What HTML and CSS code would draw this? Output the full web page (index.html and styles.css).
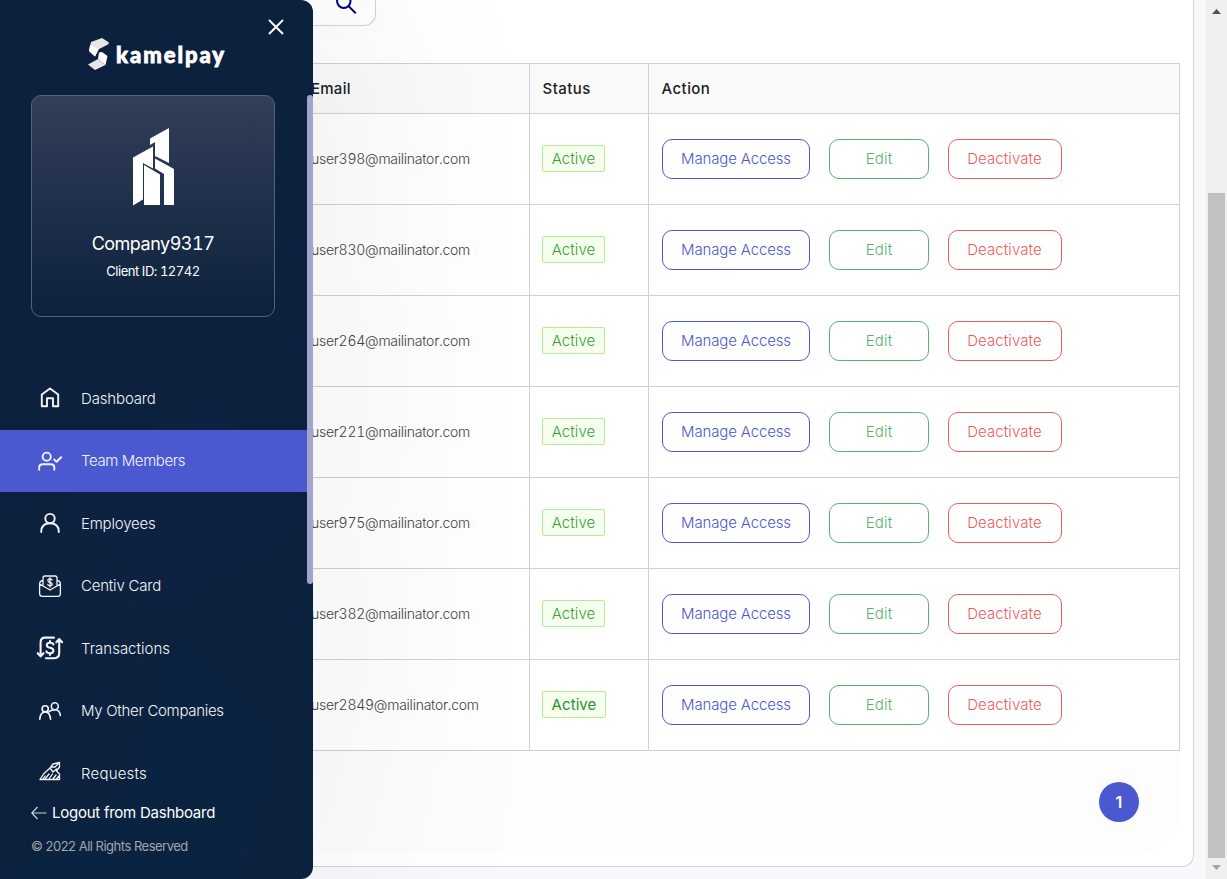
FILE: index.html
```html
<!DOCTYPE html>
<html lang="en">
<head>
<meta charset="utf-8">
<title>Team Members</title>
<link rel="stylesheet" href="styles.css">
</head>
<body>
<div class="page">
  <main class="content">
    <section class="panel">
      <div class="search"><svg width="24" height="24" viewBox="0 0 24 24" fill="none" stroke="#00007d" stroke-width="2"><circle cx="8.800" cy="9.300" r="6.700"/><path d="M13.600 14.100L20.700 21.200"/></svg></div>
      <div class="table-area">
        <table class="members">
          <thead><tr><th class="col-email">Email</th><th class="col-status">Status</th><th>Action</th></tr></thead>
          <tbody>
            <tr><td><span class="email">user398@mailinator.com</span></td><td><span class="tag">Active</span></td><td><div class="actions"><button class="btn manage"><span>Manage Access</span></button><button class="btn edit"><span>Edit</span></button><button class="btn deactivate"><span>Deactivate</span></button></div></td></tr>
            <tr><td><span class="email">user830@mailinator.com</span></td><td><span class="tag">Active</span></td><td><div class="actions"><button class="btn manage"><span>Manage Access</span></button><button class="btn edit"><span>Edit</span></button><button class="btn deactivate"><span>Deactivate</span></button></div></td></tr>
            <tr><td><span class="email">user264@mailinator.com</span></td><td><span class="tag">Active</span></td><td><div class="actions"><button class="btn manage"><span>Manage Access</span></button><button class="btn edit"><span>Edit</span></button><button class="btn deactivate"><span>Deactivate</span></button></div></td></tr>
            <tr><td><span class="email">user221@mailinator.com</span></td><td><span class="tag">Active</span></td><td><div class="actions"><button class="btn manage"><span>Manage Access</span></button><button class="btn edit"><span>Edit</span></button><button class="btn deactivate"><span>Deactivate</span></button></div></td></tr>
            <tr><td><span class="email">user975@mailinator.com</span></td><td><span class="tag">Active</span></td><td><div class="actions"><button class="btn manage"><span>Manage Access</span></button><button class="btn edit"><span>Edit</span></button><button class="btn deactivate"><span>Deactivate</span></button></div></td></tr>
            <tr><td><span class="email">user382@mailinator.com</span></td><td><span class="tag">Active</span></td><td><div class="actions"><button class="btn manage"><span>Manage Access</span></button><button class="btn edit"><span>Edit</span></button><button class="btn deactivate"><span>Deactivate</span></button></div></td></tr>
            <tr><td><span class="email">user2849@mailinator.com</span></td><td><span class="tag strong">Active</span></td><td><div class="actions"><button class="btn manage"><span>Manage Access</span></button><button class="btn edit"><span>Edit</span></button><button class="btn deactivate"><span>Deactivate</span></button></div></td></tr>
          </tbody>
        </table>
        <div class="pager"><span class="page-number">1</span></div>
      </div>
    </section>
  </main>
  <div class="scrollbar">
    <svg class="arrow" width="21" height="21" viewBox="0 0 21 21"><path d="M6 14L10.500 9L15 14Z" fill="#505050"/></svg>
    <div class="thumb"></div>
    <svg class="arrow" width="21" height="21" viewBox="0 0 21 21"><path d="M6 7L15 7L10.500 12Z" fill="#a3a3a3"/></svg>
  </div>

  <aside class="drawer">
    <svg class="backdrop" width="313" height="520" viewBox="0 0 313 520">
      <path d="M143 72L213 45L304 145L302 170L160 255L72 130Z" fill="#10264a" opacity=".3"/>
      <path d="M183 285L278 378L240 520H0L137 423L163 310Z" fill="#08274a" opacity=".38"/>
      <path d="M72 130L130 205L160 423L32 300Z" fill="#0c2444" opacity=".3"/>
    </svg>
    <header class="drawer-head">
      <svg class="mark" width="21" height="33" viewBox="0 0 21 33"><path d="M3 4L14 0L21 4.500L20 6.500L11 11L7 18.500L1 13Z" fill="#e6e6e6"/><path d="M2 7L10.500 11L7 18.500L1 13Z" fill="#fff"/><path d="M11 14.500L14 14L19.500 18L17.500 27L10 21Z" fill="#fff"/><path d="M0 26.500L10 21L17.500 27L7 32Z" fill="#e6e6e6"/></svg>
      <span class="brand">kamelpay</span>
      <svg class="close" width="16" height="16" viewBox="0 0 16 16" stroke="#fff" stroke-width="1.900"><path d="M1 1L15 15M15 1L1 15"/></svg>
    </header>
    <div class="drawer-scroll">
      <div class="drawer-body">
        <section class="company">
          <svg class="building" width="42" height="78" viewBox="0 0 42 78" fill="#fff"><path d="M17 10.500L36 0V35L22 28V14L17 17Z"/><path d="M0 29.500L20 18.500V40.500L10 35V71.500L0 77.500Z"/><path d="M11 37L27 46.500V77H11Z"/><path d="M22 30.500L41 41V77H31V46L22 40.500Z"/></svg>
          <div class="company-name">Company9317</div>
          <div class="client-id">Client ID: 12742</div>
        </section>
        <nav class="menu">
          <a class="item"><svg width="28" height="28" viewBox="0 0 28 28"><path d="M5.800 22.200V10.500L14 4.500L22.200 10.500V22.200H17V14.200H11V22.200Z"/></svg><span class="w-dash">Dashboard</span></a>
          <a class="item active"><svg width="28" height="28" viewBox="0 0 28 28"><circle cx="10.700" cy="9.700" r="4.100"/><path d="M3.200 22.800V20.500Q3.200 17.300 7 17.300H14.500Q18.300 17.300 18.300 20.500V22.800M18.200 12.500L20.500 14.800L25.200 10.200"/></svg><span class="w-team">Team Members</span></a>
          <a class="item"><svg width="28" height="28" viewBox="0 0 28 28"><circle cx="14" cy="9.600" r="4.700"/><path d="M5.200 23Q5.200 14.300 14 14.300Q22.800 14.300 22.800 23"/></svg><span class="w-emp">Employees</span></a>
          <a class="item"><svg width="28" height="28" viewBox="0 0 28 28" stroke-width="1.300"><path d="M7 8.500Q3.600 9 3.600 12V21.500Q3.600 24.400 6.500 24.400H21.500Q24.400 24.400 24.400 21.500V12Q24.400 9 21 8.500M3.600 12L14 18L24.400 12M7 14V6Q7 4 9 4H19Q21 4 21 6V14"/><path d="M16 8Q16 6.900 14 6.900Q11.900 6.900 11.900 8.600Q11.900 10.100 14 10.300Q16.200 10.600 16.200 12.200Q16.200 13.700 14 13.700Q11.900 13.700 11.800 12.500M14 5.700V15"/></svg><span class="w-card">Centiv Card</span></a>
          <a class="item"><svg width="28" height="28" viewBox="0 0 28 28" stroke-width="2.100"><path d="M18 3.600H9Q4.600 3.600 4.600 8.500V22M1.700 19.200L4.600 22.400L7.500 19.200M10 24.200H18Q23.200 24.200 23.200 19V5.500M20.300 8.200L23.200 5L26.100 8.200M17.500 10.500Q17.100 8.700 14 8.700Q10.800 8.700 10.800 11Q10.800 13.400 14 13.700Q17.400 14.100 17.400 16.700Q17.400 19.200 14 19.200Q10.700 19.200 10.400 17.300M14 7V8.500M14 19.500V21"/></svg><span class="w-trans">Transactions</span></a>
          <a class="item"><svg width="28" height="28" viewBox="0 0 28 28" stroke-width="1.600"><circle cx="9.200" cy="11.800" r="3.100"/><circle cx="18.800" cy="9.200" r="3.500"/><path d="M3.800 22.300Q4.200 15 9.200 15Q14 15 14.600 22.300M13 14.800Q15 12.800 18.800 12.800Q23.800 12.800 24.300 18.500"/></svg><span class="w-comp">My Other Companies</span></a>
          <a class="item"><svg width="28" height="28" viewBox="0 0 28 28" stroke-width="1.300"><path d="M4 20.500L7.500 15L14 9L17 5L23.500 3.500V8L20.500 12L23.500 15V20.500H4M15 8H19L22 5M14 9L17 13L20.500 10M9 20L13 15M13 20L16.500 15M17 20L20 16M20.500 20L23 17M7 20L9 17"/></svg><span class="w-req">Requests</span></a>
        </nav>
      </div>
      <div class="drawer-thumb"></div>
    </div>
    <footer class="drawer-foot">
      <a class="logout"><svg width="16" height="14" viewBox="0 0 16 14" fill="none" stroke="#ced3da" stroke-width="1.200"><path d="M15.500 7H1M6.500 1L.8 7L6.500 13"/></svg><span>Logout from Dashboard</span></a>
      <div class="copyright"><span>© 2022 All Rights Reserved</span></div>
    </footer>
  </aside>
</div>
</body>
</html>
```
FILE: styles.css
```css
* { box-sizing: border-box; }
body { margin: 0; overflow: hidden; font-family: Inter, "Liberation Sans", sans-serif; font-size: 15px; font-weight: 300; }
.page { position: relative; display: flex; width: 1227px; height: 879px; overflow: hidden; background: #f7f8fb; }
.content { width: 1206px; padding: 0 12px 12px 250px; }
.panel { height: 867px; padding-right: 13px; background: #fff; border: solid #d3d4d6; border-width: 0 1px 1px 0; border-radius: 0 0 12px 0; }
.search { width: 126px; height: 26px; display: flex; align-items: flex-end; justify-content: flex-end; padding: 0 16px 9px 0; border: solid #d3d3d3; border-width: 0 1px 1px 0; border-radius: 0 0 12px 0; background: #fff; box-shadow: 0 2px 20px rgba(0,0,0,.025); }
.table-area { margin-top: 37px; height: 790px; background: #fdfdfd; border-radius: 0 0 40px 0; }
.members { width: 930px; table-layout: fixed; border-collapse: separate; border-spacing: 0; border-top: 1px solid #d0d0d0; background: #fff; }
.members th, .members td { border: solid #d0d0d0; border-width: 0 1px 1px 0; padding: 0 13px; text-align: left; }
.members th { height: 50px; padding-left: 12.5px; background: #fafafa; color: #202124; font-weight: 500; letter-spacing: .45px; }
.members td { height: 91px; }
.members td:not(:last-child) { padding: 0 12px 2px; }
.members th:first-child, .members td:first-child { padding-left: 61px; }
.members th:first-child { letter-spacing: .25px; }
.col-email { width: 280px; }
.col-status { width: 119px; }
.email { color: #444; font-size: 14px; letter-spacing: -.25px; font-variant-numeric: tabular-nums; }
.tag { display: block; width: 63px; height: 27px; line-height: 25px; text-align: center; color: #389e3c; background: #f6ffed; border: 1px solid #b7eb8f; border-radius: 2px; font-weight: 300; letter-spacing: .1px; }
.strong { width: 64px; font-weight: 400; color: #2d8f30; }
.actions { display: flex; gap: 19px; }
.btn { height: 40px; padding: 0 0 2px; border: 1px solid; border-radius: 10px; background: #fff; font: 300 15px Inter, sans-serif; letter-spacing: -.15px; }
.manage { width: 148px; color: #4b59d1; }
.edit { width: 100px; color: #55b36c; letter-spacing: .2px; }
.deactivate { width: 114px; padding-right: 1px; color: #f05b5b; letter-spacing: .1px; }
.pager { display: flex; justify-content: flex-end; padding: 31px 41px 0 0; }
.page-number { width: 40px; height: 40px; border-radius: 50%; background: #4b59d1; color: #fff; text-align: center; line-height: 40px; font-size: 16px; font-weight: 600; }
.scrollbar { width: 21px; height: 879px; background: #f0f0f0; display: flex; flex-direction: column; justify-content: space-between; }
.scrollbar .arrow { display: block; }
.thumb { width: 17px; height: 665px; margin: 172px 0 0 2px; background: #c1c1c1; }

.drawer { position: absolute; left: 0; top: 0; width: 313px; height: 879px; display: flex; flex-direction: column; background: #0c213d; border-radius: 0 12px 12px 0; box-shadow: 0 4px 250px rgba(0,0,0,.1); color: #fff; }
.backdrop { position: absolute; left: 0; bottom: 0; border-radius: 0 0 12px 0; }
.drawer-head, .drawer-scroll, .drawer-foot { position: relative; }
.drawer-head { height: 95px; display: flex; align-items: flex-start; padding: 38px 0 0 88px; }
.brand { width: 120px; margin-left: 7px; font: 900 22px/34px Lato, sans-serif; white-space: nowrap; letter-spacing: 1.95px; -webkit-text-stroke: .8px #fff; }
.close { position: absolute; right: 29px; top: 18.500px; }
.drawer-scroll { height: 686px; display: flex; overflow: hidden; }
.drawer-body { width: 307px; }
.drawer-thumb { width: 6px; height: 489px; border-radius: 3px; background: #a1a5cc; }
.company { width: 244px; height: 222px; margin: 0 0 50px 31px; padding-top: 32px; display: flex; flex-direction: column; align-items: center; border: 1px solid #56627a; border-radius: 10px; background: linear-gradient(#333e58, #0c213d); }
.building { margin-left: 2px; }
.company-name { margin-top: 25px; font-size: 18px; line-height: 26px; font-weight: 400; letter-spacing: -.5px; font-variant-numeric: tabular-nums; }
.client-id { margin-top: 5px; font-size: 13px; line-height: 18px; font-weight: 400; letter-spacing: -.45px; font-variant-numeric: tabular-nums; }
.item { display: flex; align-items: center; height: 62.5px; padding-left: 36px; color: #f2f4f8; }
.item svg { width: 28px; margin-right: 17px; fill: none; stroke: #f2f4f8; stroke-linecap: round; stroke-linejoin: round; }
.item svg:not([stroke-width]) { stroke-width: 1.9; }
.item span { white-space: nowrap; }
.w-dash { letter-spacing: -.15px; }
.w-team { letter-spacing: -.4px; }
.w-emp { letter-spacing: -.2px; }
.w-card { letter-spacing: -.2px; }
.w-comp { letter-spacing: -.3px; }
.w-req { letter-spacing: .2px; }
.active { background: #4b59d1; }
.drawer-foot { height: 98px; padding: 20px 0 0 31px; }
.logout { display: flex; align-items: center; gap: 5px; height: 24px; font-weight: 400; letter-spacing: -.25px; }
.logout span { margin-top: -2px; }
.copyright { margin-top: 11px; line-height: 20px; font-size: 13px; font-weight: 400; color: #a4a5a7; letter-spacing: -.5px; }
```
